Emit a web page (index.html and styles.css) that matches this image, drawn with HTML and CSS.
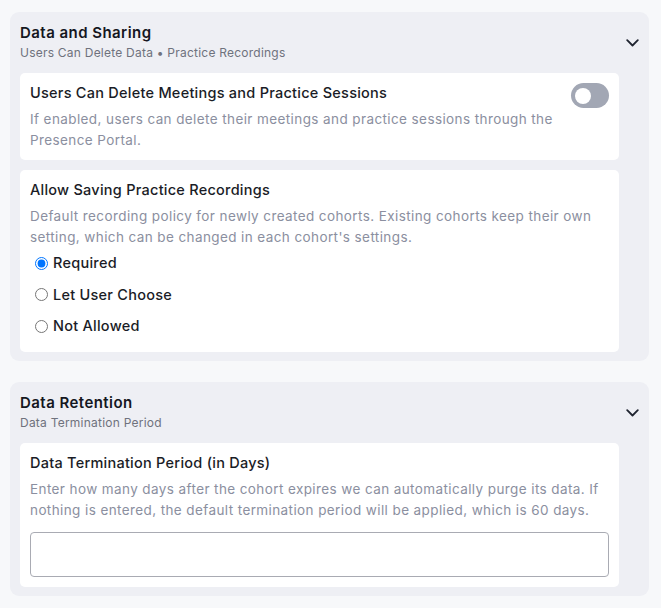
FILE: index.html
```html
<!DOCTYPE html>
<html lang="en">
<head>
<meta charset="utf-8">
<title>Settings</title>
<link rel="stylesheet" href="styles.css">
</head>
<body>
<div class="page">
  <section class="panel">
    <div class="panel-body">
      <div class="panel-head">
        <div class="panel-title">Data and Sharing</div>
        <div class="panel-sub">Users Can Delete Data • Practice Recordings</div>
      </div>
      <div class="cards">
        <div class="card card-row">
          <div class="card-text">
            <div class="card-title">Users Can Delete Meetings and Practice Sessions</div>
            <div class="card-desc">If enabled, users can delete their meetings and practice sessions through the Presence Portal.</div>
          </div>
          <span class="toggle"><span class="knob"></span></span>
        </div>
        <div class="card">
          <div class="card-title">Allow Saving Practice Recordings</div>
          <div class="card-desc">Default recording policy for newly created cohorts. Existing cohorts keep their own setting, which can be changed in each cohort's settings.</div>
          <div class="radios">
            <label class="radio"><input type="radio" name="rec" checked><span>Required</span></label>
            <label class="radio"><input type="radio" name="rec"><span>Let User Choose</span></label>
            <label class="radio"><input type="radio" name="rec"><span>Not Allowed</span></label>
          </div>
        </div>
      </div>
    </div>
    <div class="chev-col">
      <svg class="chev" width="13" height="8" viewBox="0 0 13 8"><path d="M1.2 1.2 L6.5 6.5 L11.8 1.2" fill="none" stroke="#1f2430" stroke-width="1.8" stroke-linecap="round" stroke-linejoin="round"/></svg>
    </div>
  </section>

  <section class="panel">
    <div class="panel-body">
      <div class="panel-head">
        <div class="panel-title">Data Retention</div>
        <div class="panel-sub">Data Termination Period</div>
      </div>
      <div class="cards">
        <div class="card">
          <div class="card-title">Data Termination Period (in Days)</div>
          <div class="card-desc">Enter how many days after the cohort expires we can automatically purge its data. If nothing is entered, the default termination period will be applied, which is 60 days.</div>
          <input class="text-input" type="text">
        </div>
      </div>
    </div>
    <div class="chev-col">
      <svg class="chev" width="13" height="8" viewBox="0 0 13 8"><path d="M1.2 1.2 L6.5 6.5 L11.8 1.2" fill="none" stroke="#1f2430" stroke-width="1.8" stroke-linecap="round" stroke-linejoin="round"/></svg>
    </div>
  </section>
</div>
</body>
</html>
```
FILE: styles.css
```css
html, body {
  margin: 0;
  padding: 0;
  background: #f7f8fa;
}
body {
  font-family: "Inter", "Noto Sans", sans-serif;
  color: #1a1c26;
}
.page {
  padding: 12px 12px 0 10px;
  display: flex;
  flex-direction: column;
  gap: 21px;
}
.panel {
  background: #eeeff4;
  border-radius: 9px;
  padding: 10px 10px 9px 10px;
  display: flex;
  gap: 7px;
}
.panel-body {
  flex: 1;
  min-width: 0;
}
.chev-col {
  width: 13px;
  padding-top: 17px;
}
.chev { display: block; }
.panel-title {
  font-size: 15px;
  font-weight: 600;
  line-height: 22px;
  letter-spacing: 0.45px;
  color: #15171f;
}
.panel-sub {
  font-size: 12px;
  line-height: 18px;
  letter-spacing: 0.23px;
  color: #6f727d;
}
.cards {
  margin-top: 11px;
  display: flex;
  flex-direction: column;
  gap: 10px;
}
.card {
  background: #ffffff;
  border-radius: 5px;
  padding: 9px 10px 10px 10px;
}
.card-row {
  display: flex;
  align-items: flex-start;
  gap: 16px;
}
.card-text { flex: 1; }
.card-title {
  font-size: 14.5px;
  font-weight: 500;
  line-height: 22px;
  letter-spacing: 0.25px;
  color: #1a1c26;
}
.card-desc {
  margin-top: 5px;
  font-size: 13.5px;
  line-height: 20.5px;
  letter-spacing: 0.4px;
  color: #8b8fa0;
}
.toggle {
  flex: none;
  margin-top: 1px;
  width: 38px;
  height: 25px;
  border-radius: 13px;
  background: #a2a7b4;
  display: flex;
  align-items: center;
  padding-left: 4px;
  box-sizing: border-box;
}
.knob {
  width: 16px;
  height: 16px;
  border-radius: 50%;
  background: #ffffff;
}
.radios {
  margin-top: 5px;
  margin-bottom: 5px;
  display: flex;
  flex-direction: column;
  gap: 9.5px;
}
.radio {
  display: flex;
  align-items: center;
  font-size: 14.5px;
  font-weight: 500;
  line-height: 22px;
  letter-spacing: 0.25px;
  color: #1a1c26;
}
.radio input {
  margin: 0 5px 0 5px;
  width: 13px;
  height: 13px;
}
.text-input {
  display: block;
  box-sizing: border-box;
  width: 100%;
  height: 45px;
  margin-top: 12px;
  border: 1px solid #a9abb3;
  border-radius: 4px;
  background: #fff;
  font: inherit;
}
```
